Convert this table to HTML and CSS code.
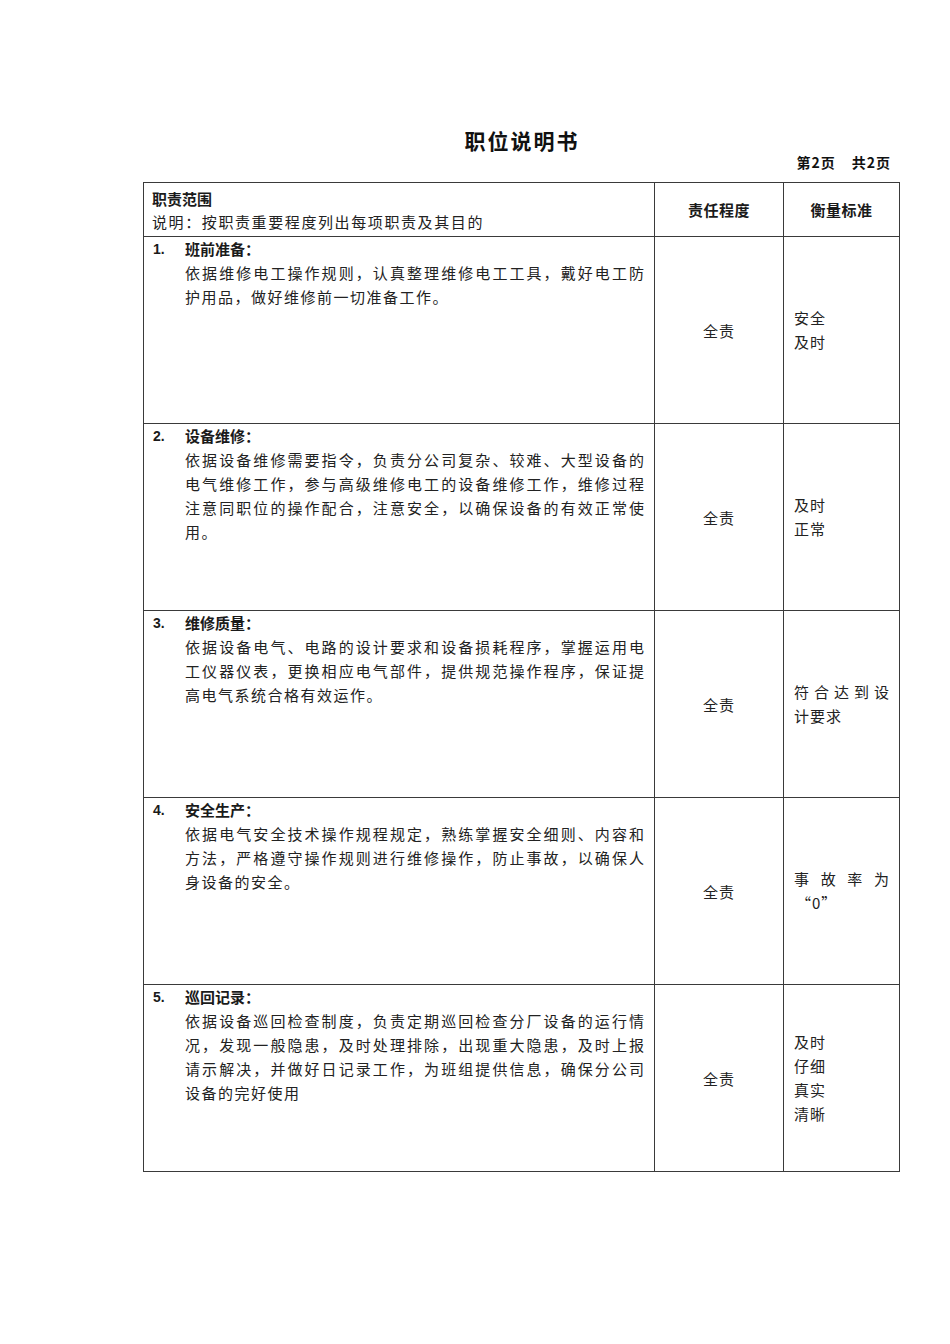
FILE: index.html
```html
<!DOCTYPE html>
<html lang="zh-CN">
<head>
<meta charset="utf-8">
<title>职位说明书</title>
<link rel="stylesheet" href="styles.css">
</head>
<body>
<div class="page">
  <h1 class="title">职位说明书</h1>
  <div class="pageno"><span>第2页</span><span>共2页</span></div>
  <table class="duty">
    <colgroup>
      <col class="c1"><col class="c2"><col class="c3">
    </colgroup>
    <tr class="head">
      <td class="hcell">
        <div class="hbold">职责范围</div>
        <div class="hnote">说明：按职责重要程度列出每项职责及其目的</div>
      </td>
      <td class="hmid">责任程度</td>
      <td class="hmid">衡量标准</td>
    </tr>
    <tr class="row">
      <td class="dcell">
        <div class="item">
          <span class="num">1.</span>
          <div class="body">
            <div class="iname">班前准备：</div>
            <div class="ln full">依据维修电工操作规则，认真整理维修电工工具，戴好电工防</div>
            <div class="ln">护用品，做好维修前一切准备工作。</div>
          </div>
        </div>
      </td>
      <td class="resp">全责</td>
      <td class="std"><div class="ln">安全</div><div class="ln">及时</div></td>
    </tr>
    <tr class="row">
      <td class="dcell">
        <div class="item">
          <span class="num">2.</span>
          <div class="body">
            <div class="iname">设备维修：</div>
            <div class="ln full">依据设备维修需要指令，负责分公司复杂、较难、大型设备的</div>
            <div class="ln full">电气维修工作，参与高级维修电工的设备维修工作，维修过程</div>
            <div class="ln full">注意同职位的操作配合，注意安全，以确保设备的有效正常使</div>
            <div class="ln">用。</div>
          </div>
        </div>
      </td>
      <td class="resp">全责</td>
      <td class="std"><div class="ln">及时</div><div class="ln">正常</div></td>
    </tr>
    <tr class="row">
      <td class="dcell">
        <div class="item">
          <span class="num">3.</span>
          <div class="body">
            <div class="iname">维修质量：</div>
            <div class="ln full">依据设备电气、电路的设计要求和设备损耗程序，掌握运用电</div>
            <div class="ln full">工仪器仪表，更换相应电气部件，提供规范操作程序，保证提</div>
            <div class="ln">高电气系统合格有效运作。</div>
          </div>
        </div>
      </td>
      <td class="resp">全责</td>
      <td class="std"><div class="ln full">符合达到设</div><div class="ln">计要求</div></td>
    </tr>
    <tr class="row">
      <td class="dcell">
        <div class="item">
          <span class="num">4.</span>
          <div class="body">
            <div class="iname">安全生产：</div>
            <div class="ln full">依据电气安全技术操作规程规定，熟练掌握安全细则、内容和</div>
            <div class="ln full">方法，严格遵守操作规则进行维修操作，防止事故，以确保人</div>
            <div class="ln">身设备的安全。</div>
          </div>
        </div>
      </td>
      <td class="resp">全责</td>
      <td class="std"><div class="ln full">事故率为</div><div class="ln quote">“0”</div></td>
    </tr>
    <tr class="row">
      <td class="dcell">
        <div class="item">
          <span class="num">5.</span>
          <div class="body">
            <div class="iname">巡回记录：</div>
            <div class="ln full">依据设备巡回检查制度，负责定期巡回检查分厂设备的运行情</div>
            <div class="ln full">况，发现一般隐患，及时处理排除，出现重大隐患，及时上报</div>
            <div class="ln full">请示解决，并做好日记录工作，为班组提供信息，确保分公司</div>
            <div class="ln">设备的完好使用</div>
          </div>
        </div>
      </td>
      <td class="resp">全责</td>
      <td class="std"><div class="ln">及时</div><div class="ln">仔细</div><div class="ln">真实</div><div class="ln">清晰</div></td>
    </tr>
  </table>
</div>
</body>
</html>
```
FILE: styles.css
```css
html, body {
  margin: 0;
  padding: 0;
  background: #ffffff;
}

body {
  font-family: "Noto Sans CJK SC", "Liberation Sans", sans-serif;
  color: #1a1a1a;
}

.page {
  width: 756px;
  padding: 127px 0 0 143px;
}

.title {
  margin: 0;
  height: 26px;
  line-height: 26px;
  font-size: 21px;
  font-weight: 700;
  text-align: center;
  letter-spacing: 2px;
  padding-left: 2px;
  color: #111;
}

.pageno {
  display: flex;
  justify-content: flex-end;
  gap: 16px;
  height: 18px;
  line-height: 18px;
  font-size: 14px;
  font-weight: 700;
  letter-spacing: 1px;
  padding-right: 8px;
  margin-bottom: 11px;
  color: #111;
}

.duty {
  width: 756px;
  table-layout: fixed;
  border-collapse: collapse;
}

.duty .c1 { width: 511px; }
.duty .c2 { width: 129px; }
.duty .c3 { width: 116px; }

.duty td {
  border: 1px solid #3a3a3a;
  padding: 0;
  font-size: 15px;
}

.head {
  height: 54px;
}

.hcell {
  vertical-align: middle;
  padding: 0 8px !important;
  line-height: 23px;
}

.hbold {
  font-weight: 700;
}

.hnote {
  letter-spacing: 1.6px;
  color: #222;
}

.hmid {
  text-align: center;
  vertical-align: middle;
  font-weight: 700;
  letter-spacing: 0.5px;
}

.row {
  height: 187px;
}

.dcell {
  vertical-align: top;
  padding: 0 10px 0 9px !important;
}

.item {
  display: flex;
  align-items: flex-start;
}

.num {
  flex: 0 0 32px;
  line-height: 24px;
  font-family: "Liberation Sans", sans-serif;
  font-weight: 700;
  font-size: 14px;
}

.body {
  flex: 1;
  line-height: 24px;
}

.iname {
  font-weight: 700;
}

.ln {
  letter-spacing: 1.5px;
  color: #222;
}

.ln.full {
  letter-spacing: 0;
  text-align: justify;
  text-align-last: justify;
}

.resp {
  text-align: center;
  vertical-align: middle;
  color: #222;
  letter-spacing: 1px;
}

.std {
  vertical-align: middle;
  padding: 0 10px 0 10px !important;
  line-height: 24px;
}

.std .ln {
  letter-spacing: 1px;
}

.std .ln.full {
  letter-spacing: 0;
}

.quote {
  padding-left: 2px;
}
```
